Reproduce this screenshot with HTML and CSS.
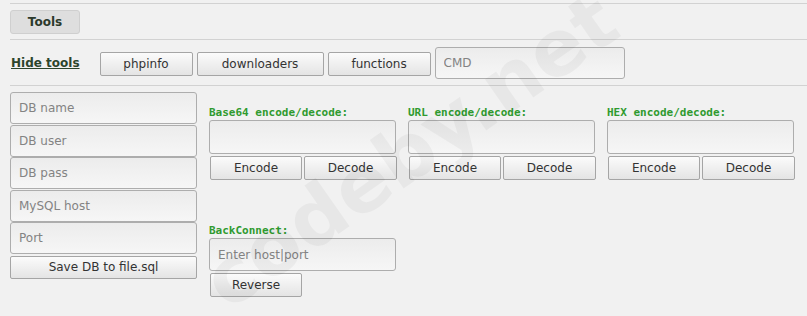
FILE: index.html
```html
<!DOCTYPE html>
<html>
  <head>
    <title>Tools</title>
    <link rel="stylesheet" href="styles.css">
  </head>
  <body>
    <div class="page">
      <div class="bar">
        <span class="tab">Tools</span>
      </div>
      <div class="bar toolrow">
        <a class="hide" href="#">Hide tools</a>
        <button class="btn wide1">phpinfo</button>
        <button class="btn wide2">downloaders</button>
        <button class="btn wide3">functions</button>
        <input class="field cmd" type="text" placeholder="CMD" />
      </div>
      <div class="main">
        <div class="db">
          <input class="field" type="text" placeholder="DB name" />
          <input class="field" type="text" placeholder="DB user" />
          <input class="field" type="text" placeholder="DB pass" />
          <input class="field" type="text" placeholder="MySQL host" />
          <input class="field" type="text" placeholder="Port" />
          <button class="btn save">Save DB to file.sql</button>
        </div>
        <div class="tools">
          <div class="coder">
            <div class="label">Base64 encode/decode:</div>
            <textarea class="field area"></textarea>
            <div class="pair">
              <button class="btn">Encode</button>
              <button class="btn">Decode</button>
            </div>
          </div>
          <div class="coder">
            <div class="label">URL encode/decode:</div>
            <textarea class="field area"></textarea>
            <div class="pair">
              <button class="btn">Encode</button>
              <button class="btn">Decode</button>
            </div>
          </div>
          <div class="coder">
            <div class="label">HEX encode/decode:</div>
            <textarea class="field area"></textarea>
            <div class="pair">
              <button class="btn">Encode</button>
              <button class="btn">Decode</button>
            </div>
          </div>
          <div class="coder back">
            <div class="label">BackConnect:</div>
            <input class="field host" type="text" placeholder="Enter host|port" />
            <button class="btn reverse">Reverse</button>
          </div>
        </div>
      </div>
      <div class="mark">codeby.net</div>
    </div>
  </body>
</html>
```

FILE: styles.css
```css
html, body {
  height: 316px;
}
body {
  margin: 0;
  background: #f1f1f1;
  font-family: "DejaVu Sans", sans-serif;
  font-size: 12px;
  color: #333;
  overflow: hidden;
}
.page {
  position: relative;
  height: 313px;
  overflow: hidden;
  padding: 3px 0 0 10px;
}
.bar {
  border-top: 1px solid #d2d2d2;
  padding: 6px 0 5px;
}
.tab {
  display: inline-block;
  width: 68px;
  height: 22px;
  line-height: 22px;
  text-align: center;
  font-weight: bold;
  color: #2c3a2c;
  background: #dedede;
  border: 1px solid #cfcfcf;
  border-radius: 3px;
}
.toolrow {
  display: flex;
  align-items: center;
  padding: 6px 0 6px;
  border-bottom: 1px solid #d2d2d2;
}
.hide {
  font-weight: bold;
  color: #2c452c;
  margin: 1px 20px 0 1px;
}
.btn {
  font-family: "DejaVu Sans", sans-serif;
  font-size: 12px;
  color: #333;
  height: 24px;
  padding: 0;
  background: linear-gradient(#fbfbfb, #e4e4e4);
  border: 1px solid #a5a5a5;
  border-radius: 2px;
  margin-right: 4px;
}
.toolrow .btn {
  margin-top: 2px;
}
.wide1 { width: 93px; }
.wide2 { width: 127px; }
.wide3 { width: 103px; }
.field {
  box-sizing: border-box;
  font-family: "DejaVu Sans", sans-serif;
  font-size: 12px;
  color: #333;
  background: linear-gradient(#ececec, #f6f6f6);
  border: 1px solid #adadad;
  border-radius: 3px;
  padding: 0 8px;
  margin: 0;
}
.field::placeholder {
  color: #838383;
}
.cmd {
  width: 190px;
  height: 32px;
  margin-top: 1px;
}
.main {
  display: flex;
  gap: 12px;
  padding-top: 6px;
}
.db {
  display: flex;
  flex-direction: column;
  gap: 0.5px;
  width: 187px;
}
.db .field {
  height: 32px;
}
.db .save {
  width: 100%;
  height: 23px;
  margin: 1px 0 0;
}
.tools {
  display: grid;
  grid-template-columns: repeat(3, 187px);
  column-gap: 12px;
  row-gap: 44px;
  padding-top: 14px;
}
.label {
  font-family: "DejaVu Sans Mono", monospace;
  font-size: 11px;
  font-weight: bold;
  color: #2f9a2f;
  height: 14px;
}
.area {
  display: block;
  width: 187px;
  height: 34px;
  resize: none;
}
.pair {
  display: grid;
  grid-template-columns: 92px 93px;
  gap: 2px;
  padding: 2px 0 0 1px;
}
.pair .btn {
  margin: 0;
}
.host {
  display: block;
  width: 187px;
  height: 33px;
}
.reverse {
  display: block;
  width: 92px;
  margin: 2px 0 0 1px;
}
.mark {
  position: absolute;
  left: 155px;
  top: 106px;
  width: 510px;
  text-align: center;
  font-family: "DejaVu Sans", sans-serif;
  font-weight: bold;
  font-size: 78px;
  color: rgba(0, 0, 0, 0.04);
  transform: rotate(-35deg);
  pointer-events: none;
}
```
